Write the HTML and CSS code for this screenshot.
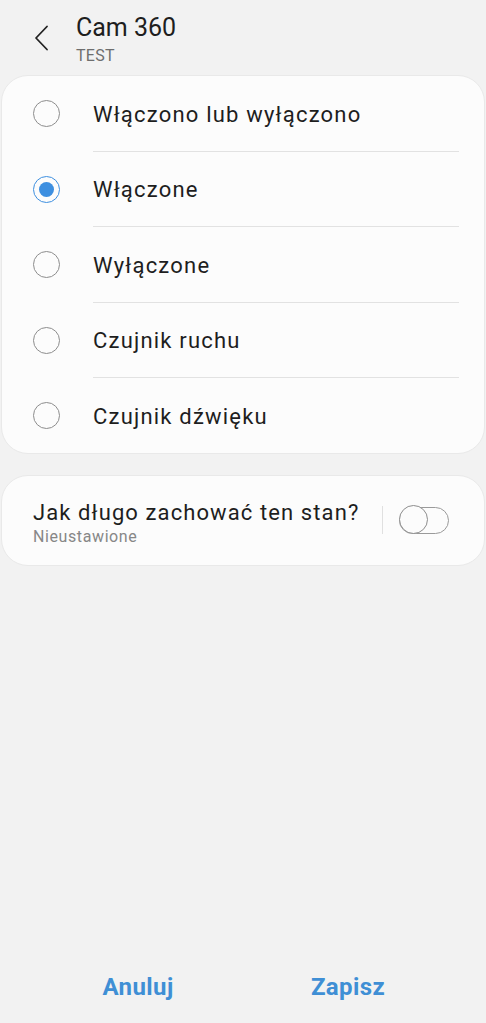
FILE: index.html
```html
<!DOCTYPE html>
<html lang="pl">
<head>
<meta charset="utf-8">
<link rel="stylesheet" href="styles.css">
</head>
<body>
<div class="screen">
  <header class="header">
    <button class="back" aria-label="Wstecz">
      <svg width="16" height="26" viewBox="0 0 16 26"><path d="M13 1.5 L2 13 L13 24.5" fill="none" stroke="#222" stroke-width="1.8" stroke-linecap="round" stroke-linejoin="round"/></svg>
    </button>
    <div class="titles">
      <div class="title">Cam 360</div>
      <div class="subtitle">TEST</div>
    </div>
  </header>

  <section class="card options">
    <div class="row"><span class="radio"></span><span class="label">Włączono lub wyłączono</span></div>
    <div class="row"><span class="radio checked"></span><span class="label">Włączone</span></div>
    <div class="row"><span class="radio"></span><span class="label">Wyłączone</span></div>
    <div class="row"><span class="radio"></span><span class="label">Czujnik ruchu</span></div>
    <div class="row"><span class="radio"></span><span class="label">Czujnik dźwięku</span></div>
  </section>

  <section class="card duration">
    <div class="duration-text">
      <div class="duration-title">Jak długo zachować ten stan?</div>
      <div class="duration-sub">Nieustawione</div>
    </div>
    <span class="vsep"></span>
    <span class="switch"><span class="thumb"></span></span>
  </section>

  <footer class="footer">
    <button class="action">Anuluj</button>
    <button class="action">Zapisz</button>
  </footer>
</div>
</body>
</html>
```

FILE: styles.css
```css
* { box-sizing: border-box; }
html, body { margin: 0; padding: 0; }
body {
  background: #f2f2f2;
  font-family: Roboto, "Noto Sans", "Liberation Sans", sans-serif;
  color: #1e1e1e;
}
.screen {
  min-height: 1023px;
  display: flex;
  flex-direction: column;
}
.header {
  height: 75px;
  display: flex;
  align-items: flex-start;
  padding-top: 13px;
}
.back {
  background: none;
  border: 0;
  padding: 0;
  margin: 12px 0 0 34px;
  width: 16px;
  height: 26px;
  display: flex;
}
.titles { margin-left: 26px; }
.title {
  font-size: 25px;
  line-height: 30px;
  color: #1e1e1e;
}
.subtitle {
  font-size: 16px;
  line-height: 18px;
  color: #6e6e6e;
  margin-top: 4px;
  letter-spacing: 0.3px;
}
.card {
  background: #fcfcfc;
  border: 1px solid #e9e9e9;
  border-radius: 27px;
  margin: 0 1px;
}
.row {
  height: 75.5px;
  padding-top: 2px;
  display: flex;
  align-items: center;
  position: relative;
}
.row:first-child { margin-top: -1px; }
.row + .row::before {
  content: "";
  position: absolute;
  top: 0;
  left: 91px;
  right: 25px;
  height: 1px;
  background: #e2e2e2;
}
.radio {
  width: 27px;
  height: 27px;
  border-radius: 50%;
  border: 1.5px solid #8d8d8d;
  margin-left: 31px;
  margin-right: 33px;
  flex: none;
  display: flex;
  align-items: center;
  justify-content: center;
}
.radio.checked { border-color: #3d8fe0; }
.radio.checked::after {
  content: "";
  width: 15px;
  height: 15px;
  border-radius: 50%;
  background: #3d8fe0;
}
.label {
  font-size: 22px;
  letter-spacing: 1.2px;
  color: #1e1e1e;
  padding-top: 1px;
}
.duration {
  margin-top: 21px;
  height: 91px;
  display: flex;
  align-items: center;
  padding: 0 35px 0 31px;
}
.duration-text { flex: 1; padding-top: 6px; }
.duration-title { font-size: 22px; line-height: 26px; letter-spacing: 1.1px; color: #1e1e1e; }
.duration-sub { font-size: 16px; line-height: 20px; letter-spacing: 0.6px; color: #878787; margin-top: 1px; }
.vsep {
  width: 1px;
  height: 28px;
  background: #e0e0e0;
  margin-right: 16px;
}
.switch {
  position: relative;
  width: 50px;
  height: 27px;
  border: 1.5px solid #9a9a9a;
  border-radius: 14px;
  flex: none;
}
.switch .thumb {
  position: absolute;
  left: -1.5px;
  top: -2.5px;
  width: 29px;
  height: 29px;
  border-radius: 50%;
  border: 1.5px solid #8d8d8d;
  background: #fcfcfc;
}
.footer {
  margin-top: auto;
  height: 72px;
  display: flex;
  justify-content: center;
  align-items: center;
  gap: 10px;
}
.action {
  width: 200px;
  background: none;
  border: 0;
  font-family: Roboto, "Noto Sans", "Liberation Sans", sans-serif;
  font-size: 24px;
  font-weight: 700;
  letter-spacing: 0.4px;
  color: #3f8fd5;
  padding: 0;
  line-height: 30px;
}
```
